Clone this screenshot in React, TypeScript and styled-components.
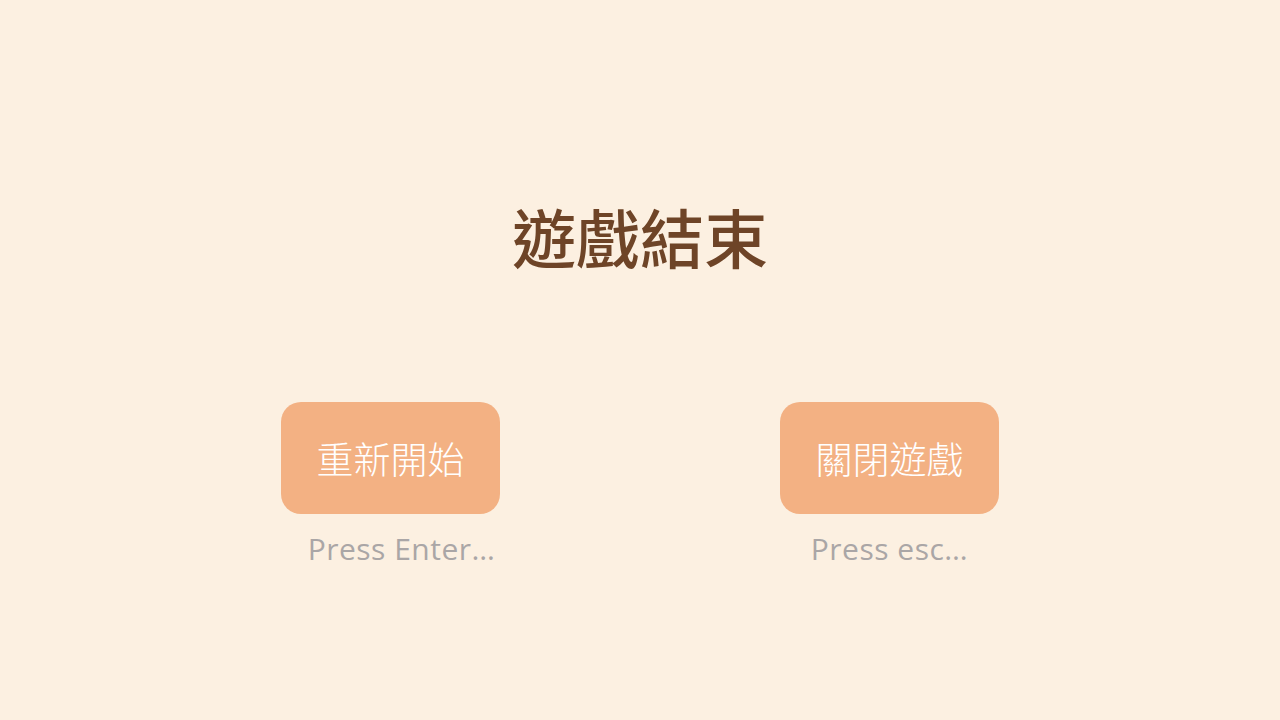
import React from "react";
import styled, { createGlobalStyle } from "styled-components";

const Global = createGlobalStyle`
  html, body { margin: 0; padding: 0; background: #fcf0e1; }
  body { font-family: "Noto Sans CJK TC", "Noto Sans", sans-serif; }
`;

const Screen = styled.div`
  width: 1280px;
  height: 720px;
  background: #fcf0e1;
  display: flex;
  flex-direction: column;
  align-items: center;
  padding-top: 195px;
  box-sizing: border-box;
`;

const Title = styled.h1`
  margin: 0;
  font-family: "Noto Sans CJK TC", serif;
  font-size: 64px;
  line-height: 80px;
  font-weight: 500;
  color: #6e4427;
`;

const Row = styled.div`
  display: flex;
  gap: 280px;
  margin-top: 127px;
`;

const Column = styled.div`
  display: flex;
  flex-direction: column;
  align-items: center;
  width: 219px;
`;

const Button = styled.button`
  width: 219px;
  height: 112px;
  border: none;
  border-radius: 20px;
  background: #f3b183;
  color: #ffffff;
  font-family: "Noto Sans CJK TC", sans-serif;
  font-size: 37px;
  font-weight: 300;
  cursor: pointer;
`;

const Hint = styled.div<{ $shift?: number }>`
  margin-top: 15px;
  padding-left: ${(p) => p.$shift ?? 0}px;
  font-family: "Open Sans", Lato, sans-serif;
  font-size: 30px;
  line-height: 40px;
  letter-spacing: 0.5px;
  color: #aaa6a6;
  white-space: nowrap;
`;

export default function App() {
  return (
    <>
      <Global />
      <Screen>
        <Title>遊戲結束</Title>
        <Row>
          <Column>
            <Button>重新開始</Button>
            <Hint $shift={22}>Press Enter…</Hint>
          </Column>
          <Column>
            <Button>關閉遊戲</Button>
            <Hint>Press esc…</Hint>
          </Column>
        </Row>
      </Screen>
    </>
  );
}
